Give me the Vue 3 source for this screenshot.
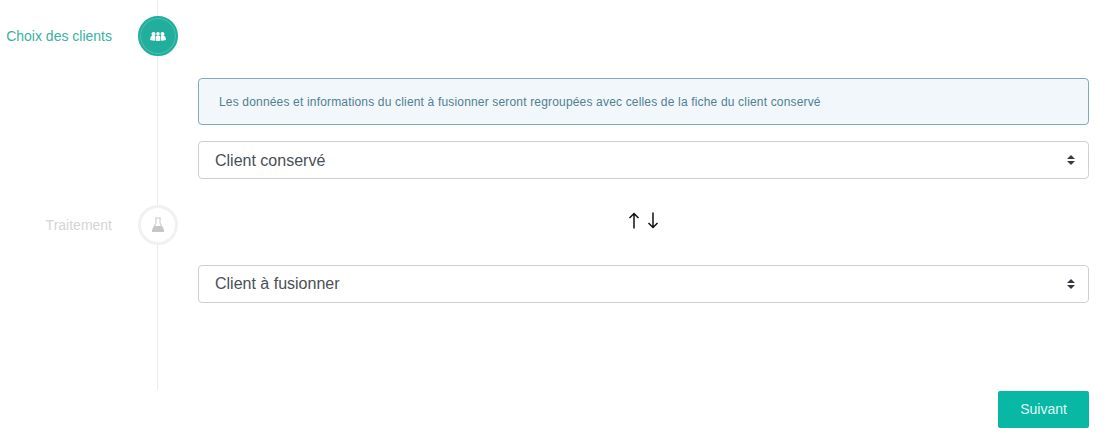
<script setup>
import { ref } from 'vue';

const kept = ref('');
const merged = ref('');
</script>

<template>
  <div class="wizard">
    <div class="steps">
      <div class="line first"></div>
      <div class="step active">
        <span class="label">Choix des clients</span>
        <span class="circle">
          <svg width="16" height="9" viewBox="0 0 16 9">
            <circle cx="3.500" cy="2" r="2" fill="#fff" />
            <path fill="#fff" d="M0 8 .8 4.500 2.500 3.600H4.500L5.200 4.200V8.800L2.500 8.500Z" />
            <circle cx="8" cy="1.800" r="1.800" fill="#fff" />
            <path fill="#fff" d="M5.800 8.800V4.400L7 3.600H9L10.200 4.400V8.800L8 9Z" />
            <circle cx="12.500" cy="2" r="2" fill="#fff" />
            <path fill="#fff" d="M16 8 15.200 4.500 13.500 3.600H11.500L10.800 4.200V8.800L13.500 8.500Z" />
          </svg>
        </span>
      </div>
      <div class="line middle"></div>
      <div class="step">
        <span class="label">Traitement</span>
        <span class="circle">
          <svg width="14" height="16" viewBox="0 0 14 16">
            <path fill="none" stroke="#cdcdcd" stroke-width="1.100" d="M4 1h6M5 1v5L1.500 13a1 1 0 0 0 1 1.500h9a1 1 0 0 0 1-1.500L9 6V1" />
            <path fill="#c6c6c6" d="M3.400 9h7.200L13 13.400a1.100 1.100 0 0 1-1 1.600H2a1.100 1.100 0 0 1-1-1.600Z" />
          </svg>
        </span>
      </div>
      <div class="line last"></div>
    </div>

    <div class="content">
      <div class="alert">Les données et informations du client à fusionner seront regroupées avec celles de la fiche du client conservé</div>

      <select v-model="kept" class="field">
        <option value="">Client conservé</option>
      </select>

      <div class="swap">
        <svg width="12" height="17" viewBox="0 0 12 17">
          <path fill="none" stroke="#111" stroke-width="1.500" d="M6 16.500V1.500M1.500 6l4.500-4.500L10.500 6" />
        </svg>
        <svg width="12" height="17" viewBox="0 0 12 17">
          <path fill="none" stroke="#111" stroke-width="1.500" d="M6 .5v15M1.500 11l4.500 4.500L10.500 11" />
        </svg>
      </div>

      <select v-model="merged" class="field">
        <option value="">Client à fusionner</option>
      </select>

      <div class="actions">
        <button class="next">Suivant</button>
      </div>
    </div>
  </div>
</template>

<style scoped>
.wizard {
  display: flex;
  height: 448px;
  font-family: "Liberation Sans", Arial, sans-serif;
  background: #fff;
  overflow: hidden;
}

.steps {
  width: 178px;
  flex-shrink: 0;
  display: flex;
  flex-direction: column;
}

.line {
  width: 1px;
  margin-left: 157px;
  background: #e9ecef;
}

.line.first {
  height: 16px;
}

.line.middle {
  height: 150px;
}

.line.last {
  height: 145px;
}

.step {
  display: flex;
  align-items: center;
  height: 40px;
}

.label {
  width: 112px;
  margin-right: 26px;
  text-align: right;
  font-size: 14px;
  color: #d5d5d5;
  white-space: nowrap;
}

.circle {
  width: 40px;
  height: 40px;
  box-sizing: border-box;
  display: flex;
  align-items: center;
  justify-content: center;
  border-radius: 50%;
  border: 3px solid #f1f1f1;
  background: #fff;
}

.step:not(.active) {
  margin-top: -1px;
}

.active .label {
  color: #3ab1a3;
}

.active .circle {
  background: #22ae9d;
  border: 2px solid #22ae9d;
  box-shadow: inset 0 0 0 1px #4cc0b2;
}

.content {
  width: 891px;
  margin-left: 20px;
  padding-top: 78px;
  display: flex;
  flex-direction: column;
}

.alert {
  height: 47px;
  box-sizing: border-box;
  padding: 0 20px;
  display: flex;
  align-items: center;
  font-size: 12px;
  letter-spacing: 0.17px;
  color: #527f93;
  background: #f1f7fb;
  border: 1px solid #84aab8;
  border-radius: 4px;
  margin-bottom: 16px;
}

.field {
  height: 38px;
  width: 100%;
  box-sizing: border-box;
  padding: 0 16px;
  font-family: inherit;
  font-size: 16px;
  color: #495057;
  background: #fff url("data:image/svg+xml,%3Csvg xmlns='http://www.w3.org/2000/svg' width='8' height='10' viewBox='0 0 4 5'%3E%3Cpath fill='%23343a40' d='M2 0 0 2h4zm0 5L0 3h4z'/%3E%3C/svg%3E") no-repeat right 13px center;
  border: 1px solid #cfcfcf;
  border-radius: 4px;
  appearance: none;
}

.swap {
  height: 85.6px;
  padding-bottom: 2px;
  box-sizing: border-box;
  display: flex;
  align-items: center;
  justify-content: center;
  gap: 7px;
}

.actions {
  display: flex;
  justify-content: flex-end;
  margin-top: 88.400px;
}

.next {
  width: 91px;
  height: 37px;
  border: none;
  border-radius: 2px;
  background: #09b7a5;
  color: #dffbf7;
  font-family: inherit;
  font-size: 14px;
}
</style>
